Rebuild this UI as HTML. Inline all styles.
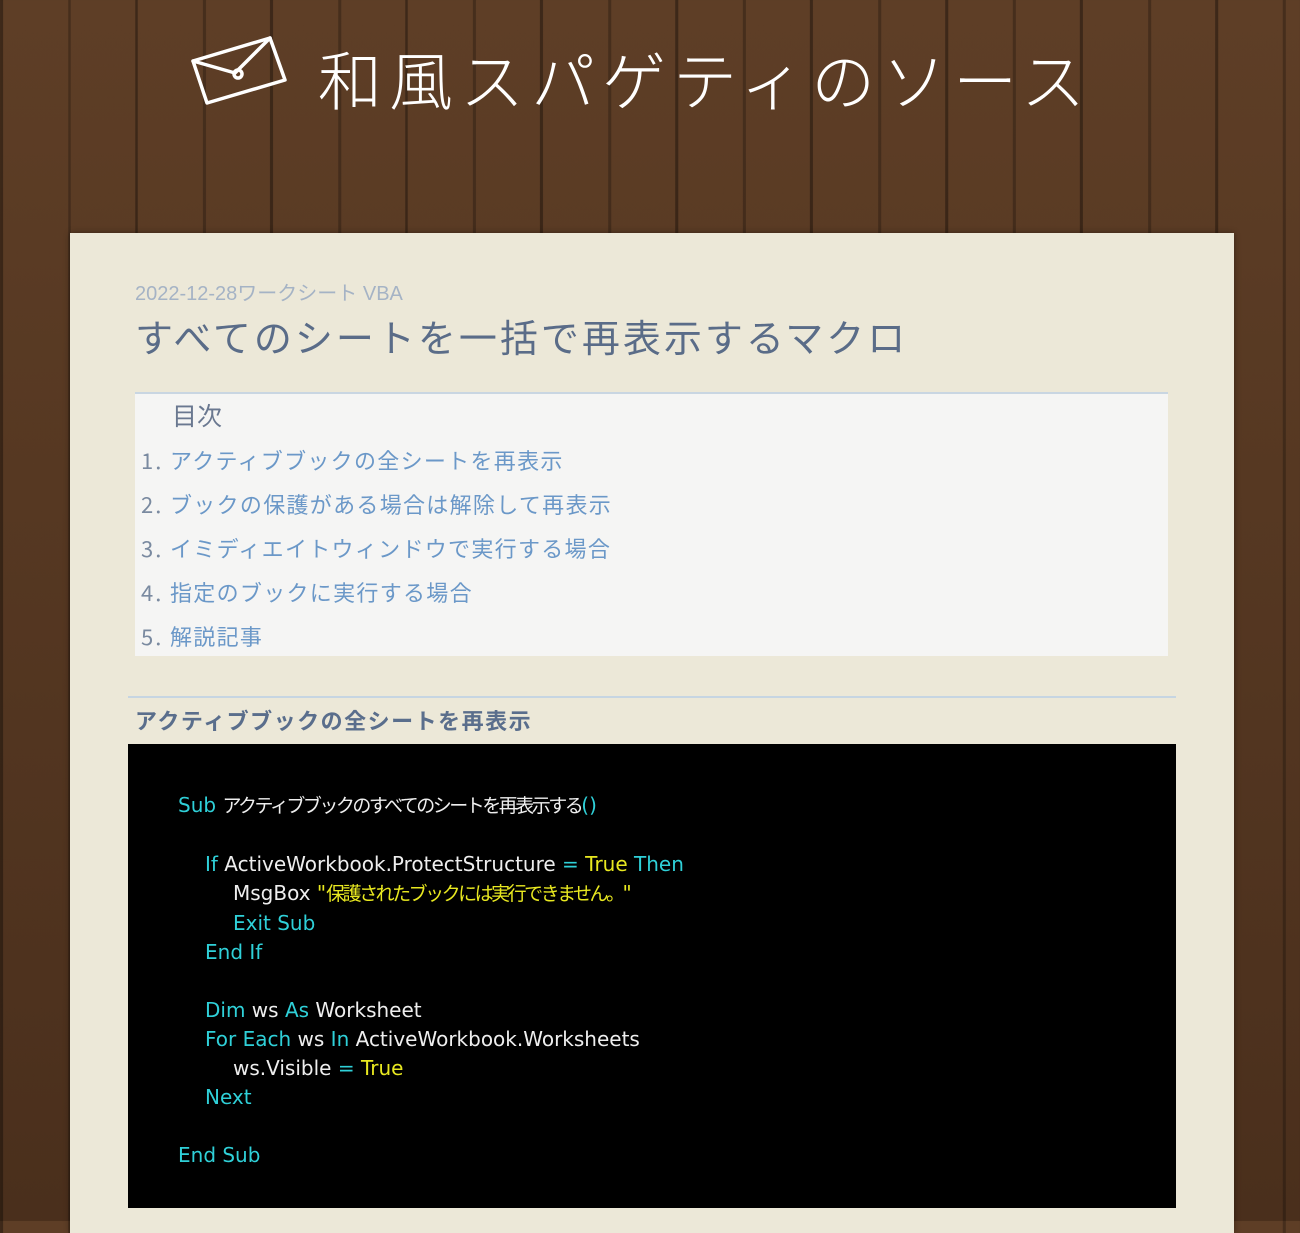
<!DOCTYPE html>
<html><head><meta charset="utf-8"><style>
*{margin:0;padding:0;box-sizing:border-box}
body{width:1300px;height:1221px;overflow:hidden;position:relative;font-family:"Liberation Sans","Noto Sans CJK JP",sans-serif;
background:#553722;
background-image:repeating-linear-gradient(90deg,rgba(0,0,0,.35) 0 3px,transparent 3px 68px,rgba(0,0,0,.25) 68px 71px,transparent 71px 135px),
linear-gradient(180deg,#5e3e26,#4a2f1c);}
.hdr{position:absolute;left:318px;top:32px;font-size:64px;color:#fff;letter-spacing:7px;white-space:nowrap;font-family:"Noto Sans CJK JP",sans-serif;font-weight:300}
svg.env{position:absolute;left:185px;top:28px}
.paper{position:absolute;left:70px;top:233px;width:1164px;height:1000px;background:#ece8d8;box-shadow:0 0 6px rgba(0,0,0,.4)}
.meta{position:absolute;left:135px;top:277px;font-size:20px;color:#a5b3c5;white-space:nowrap}
.title{position:absolute;left:135px;top:308px;font-size:38px;color:#5a6c88;white-space:nowrap;font-family:"Noto Sans CJK JP",sans-serif;letter-spacing:3px}
.toc{position:absolute;left:135px;top:392px;width:1033px;height:264px;background:#f5f5f4;border-top:2px solid #c9d6e2}
.toc .h{position:absolute;left:37px;top:3px;font-size:25px;color:#6a7890;font-family:"Noto Sans CJK JP",sans-serif}
.toc .i{position:absolute;left:6px;font-size:22px;color:#6b98c8;white-space:nowrap;font-family:"Noto Sans CJK JP",sans-serif;letter-spacing:1.3px}
.toc .i b{font-weight:normal;color:#7a8aa0;display:inline-block;width:29px;letter-spacing:2px}
.rule{position:absolute;left:128px;top:696px;width:1048px;height:2px;background:#c6d5e2}
.h2{position:absolute;left:135px;top:704px;font-size:22px;color:#5a6e8c;font-weight:bold;font-family:"Noto Sans CJK JP",sans-serif;letter-spacing:1.5px}
.code{position:absolute;left:128px;top:744px;width:1048px;height:464px;background:#000}
.code pre{position:absolute;left:50px;top:47px;font-family:"DejaVu Sans","Noto Sans CJK JP",sans-serif;font-size:20px;line-height:29px;color:#eee;letter-spacing:0}
.c{color:#2fd0d8}.y{color:#e8e820}
.j{letter-spacing:-2.5px;font-size:19px}
.i1{padding-left:27px}.i2{padding-left:55px}
</style></head><body>
<svg class="env" width="110" height="90" viewBox="0 0 110 90"><g fill="none" stroke="#fff" stroke-width="3.5" stroke-linejoin="round" stroke-linecap="round"><path d="M8 33 L85 10 L100 52 L22 75 Z"/><path d="M8 33 L50 45 L85 10"/><circle cx="53" cy="46" r="4"/></g></svg>
<div class="hdr">和風スパゲティのソース</div>
<div class="paper"></div>
<div class="meta">2022-12-28ワークシート VBA</div>
<div class="title">すべてのシートを一括で再表示するマクロ</div>
<div class="toc">
<div class="h">目次</div>
<div class="i" style="top:50px"><b>1.</b>アクティブブックの全シートを再表示</div>
<div class="i" style="top:94px"><b>2.</b>ブックの保護がある場合は解除して再表示</div>
<div class="i" style="top:138px"><b>3.</b>イミディエイトウィンドウで実行する場合</div>
<div class="i" style="top:182px"><b>4.</b>指定のブックに実行する場合</div>
<div class="i" style="top:226px"><b>5.</b>解説記事</div>
</div>
<div class="rule"></div>
<div class="h2">アクティブブックの全シートを再表示</div>
<div class="code"><pre><span class="c">Sub</span> <span class="j">アクティブブックのすべてのシートを再表示する</span><span class="c">()</span>

<span class="i1"><span class="c">If</span> ActiveWorkbook.ProtectStructure <span class="c">=</span> <span class="y">True</span> <span class="c">Then</span></span>
<span class="i2">MsgBox <span class="y">"<span class="j">保護されたブックには実行できません。</span>"</span></span>
<span class="i2"><span class="c">Exit Sub</span></span>
<span class="i1"><span class="c">End If</span></span>

<span class="i1"><span class="c">Dim</span> ws <span class="c">As</span> Worksheet</span>
<span class="i1"><span class="c">For Each</span> ws <span class="c">In</span> ActiveWorkbook.Worksheets</span>
<span class="i2">ws.Visible <span class="c">=</span> <span class="y">True</span></span>
<span class="i1"><span class="c">Next</span></span>

<span class="c">End Sub</span></pre></div>
</body></html>
